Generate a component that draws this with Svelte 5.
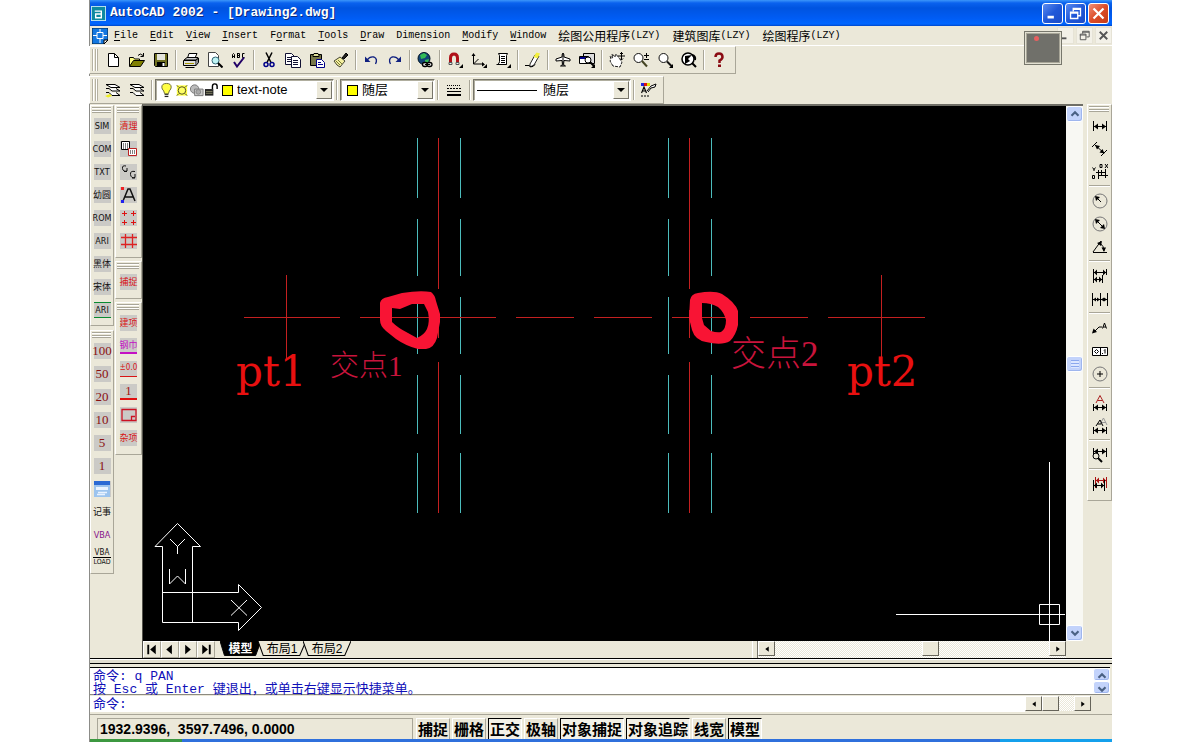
<script>
  const menus = [
    { pre: '', key: 'F', rest: 'ile' },
    { pre: '', key: 'E', rest: 'dit' },
    { pre: '', key: 'V', rest: 'iew' },
    { pre: '', key: 'I', rest: 'nsert' },
    { pre: 'F', key: 'o', rest: 'rmat' },
    { pre: '', key: 'T', rest: 'ools' },
    { pre: '', key: 'D', rest: 'raw' },
    { pre: 'Dime', key: 'n', rest: 'sion' },
    { pre: '', key: 'M', rest: 'odify' },
    { pre: '', key: 'W', rest: 'indow' },
    { cjk: '绘图公用程序', rest: '(LZY)' },
    { cjk: '建筑图库', rest: '(LZY)' },
    { cjk: '绘图程序', rest: '(LZY)' }
  ];

  const lens = '<circle cx="6.5" cy="6" r="4.5" fill="#fff" stroke="#111"/><path d="M10 9.500l5 5" stroke="#111" stroke-width="2"/>';
  const corner = '<path d="M16 12v4h-4z" fill="#000"/>';
  const hdim = '<path d="M1.500 3v10M14.500 3v10M2 8.500h12" stroke="#000" fill="none"/><path d="M2 8.500l4-3v6zM14 8.500l-4-3v6z" fill="#000"/>';
  const sheet = (x, y) =>
    `<path d="M${x}.500 ${y}.500h6l3 3v8h-9z" fill="#fff" stroke="#113"/><path d="M${x + 2} ${y + 4}.500h5M${x + 2} ${y + 6}.500h5M${x + 2} ${y + 8}.500h5" stroke="#113"/>`;

  const icons = {
    new: '<path d="M3.500 1.500h6l4 4v9h-10z" fill="#fff" stroke="#000"/><path d="M9.500 1.500v4h4" fill="none" stroke="#000"/>',
    open: '<path d="M.5 14V5.500h4l1 1.500h5v2" fill="#ffff80" stroke="#000"/><path d="M.5 14.500l4-6h11l-4 6z" fill="#808000" stroke="#000"/><path d="M9 3.500q2-3 5 0M14.500 1v3.500h-3" fill="none" stroke="#000"/>',
    save: '<path d="M1.500 1.500h13v13h-12l-1-1z" fill="#6f6f20" stroke="#000"/><path d="M4 2h8v6H4z" fill="#e4e4dc"/><path d="M4 10h8v5H4z" fill="#000"/><path d="M9.500 11h2v3h-2z" fill="#fff"/>',
    print: '<path d="M4.500 6l1.500-4.500h8L12 6" fill="#fff" stroke="#000"/><path d="M1 8l3-2.500h11L13 8z" fill="#ccc" stroke="#000"/><path d="M.5 8.500h12.500v5H.5z" fill="#ddd" stroke="#000"/><path d="M13 13.500l2.500-3V6L13 8.500" fill="#888" stroke="#000"/><path d="M2 11.500h9" stroke="#a90" stroke-width="1"/><path d="M2.500 15.500h9" stroke="#000"/>',
    preview: '<path d="M1.500 .5h7l3 3v11h-10z" fill="#fff" stroke="#444"/><circle cx="8.500" cy="8.500" r="3.500" fill="#bff4f4" stroke="#367"/><path d="M11 11l4.500 4.500" stroke="#000" stroke-width="2"/>',
    spell: '<path d="M1.500 6V2.500l1-1 1 1V6M1.500 4.500h2M6.500 1v5M6.500 1.500h2v2h-2h2v2h-2M13.500 1.500h-2v4h2" fill="none" stroke="#000"/><path d="M3 10l3 4.500 7-9" fill="none" stroke="#206" stroke-width="2"/>',
    cut: '<path d="M5 .5l5 10M11 .5l-5 10" stroke="#000" stroke-width="1.500"/><circle cx="5" cy="12.500" r="2" fill="none" stroke="#008" stroke-width="1.500"/><circle cx="11" cy="12.500" r="2" fill="none" stroke="#008" stroke-width="1.500"/>',
    copy: sheet(0, 1) + sheet(6, 4),
    paste: '<path d="M1.500 2.500h11v11h-11z" fill="#77774a" stroke="#000"/><path d="M4 3.500l1-2h4l1 2v1H4z" fill="#dd9" stroke="#000"/><path d="M7.500 7.500h5l3 3v5h-8z" fill="#fff" stroke="#008"/><path d="M9 10.500h3M9 12.500h5" stroke="#008"/>',
    brush: '<path d="M1 9l6-4 5 4-5 6q-3-1-6-6z" fill="#f4f0a0" stroke="#443"/><path d="M3 9l4 4M5 8l4 4" stroke="#773"/><path d="M9 6l4-5 2 2-4 4z" fill="#222" stroke="#000"/>',
    undo: '<path d="M4 8q3-4 7-3 4 2 1.500 7" fill="none" stroke="#102080" stroke-width="1.300"/><path d="M2 4.500v5.500h5.500z" fill="#102080"/>',
    redo: '<path d="M12 8Q9 4 5 5 1 7 3.500 12" fill="none" stroke="#102080" stroke-width="1.300"/><path d="M14 4.500v5.500H8.500z" fill="#102080"/>',
    globe: '<circle cx="7" cy="6.500" r="6" fill="#147" stroke="#012"/><path d="M3 3l4-2 3 2-2 3-4 1zM8 8l4-1-1 4H8z" fill="#3b5"/><rect x="5.500" y="10.500" width="5" height="4" rx="2" fill="#ddd" stroke="#000" stroke-width="1.300"/><rect x="10" y="10.500" width="5" height="4" rx="2" fill="#ddd" stroke="#000" stroke-width="1.300"/><path d="M8 12.500h5" stroke="#000"/>',
    magnet: '<path d="M3.500 12V6q0-4 3.500-4t3.500 4v6" fill="none" stroke="#b01018" stroke-width="3"/><path d="M2 10.500h3v2H2zM9 10.500h3v2H9z" fill="#eee" stroke="#555"/>' + corner,
    ucs: '<path d="M2.500 2v10h10M2.500 12l5-5" fill="none" stroke="#000"/><path d="M.5 4l2-3 2 3zM11 10l3 2.500-3 2z" fill="#000"/>' + corner,
    props: '<path d="M3.500 1.500h9l-1 2v9h-9q2-1 2-3v-6z" fill="#fff" stroke="#000"/><path d="M1.500 12.500h10M6 4.500h4M6 6.500h4M6 8.500h4M6 10.500h4" stroke="#000"/>' + corner,
    pencil: '<path d="M5 12l5-9 4 1-5 9-4 2z" fill="#fff" stroke="#222"/><path d="M8.500 5L11.500 .5l3.500 1-2.500 5z" fill="#f4f040"/><path d="M0 13.500h4q3 3 6-1" fill="none" stroke="#000"/>',
    plane: '<path d="M8 1q1 0 1 4l6 2v2l-6-.5-.5 4 2 1.500h-5l2-1.500-.5-4L1 9V7l6-2q0-4 1-4z" fill="#fff" stroke="#000"/><path d="M8 2v12" stroke="#000"/>',
    aerial: '<path d="M4.500 1.500h11v10h-11z" fill="#ddd" stroke="#000"/><path d="M.5 4.500h9v7h-9z" fill="#fff" stroke="#000"/><path d="M1 5h8v2H1z" fill="#008"/><circle cx="9" cy="8" r="3" fill="#fff" stroke="#000"/><path d="M11 10l4 4" stroke="#000" stroke-width="2"/>' + corner,
    pan: '<path d="M4 14L1 9l1-2-1-3 3 2-1-4 3.500 3L7 2l3 4 3 4-2 5z" fill="#fff" stroke="#222" stroke-dasharray="3 1"/><path d="M12.500 0v8M9 4h7M11 2l1.500-1.500L14 2M11 6.500l1.500 1.500L14 6.500" fill="none" stroke="#000"/>',
    zoompm: '<circle cx="5.500" cy="6" r="4.500" fill="#fff" stroke="#111"/><path d="M9 9l5 5.500" stroke="#442" stroke-width="2"/><path d="M13.500 1v5M11 3.500h5M11 7.500h5" stroke="#000"/>',
    zoom: lens + corner,
    zoomprev: '<circle cx="7" cy="7" r="6" fill="#fff" stroke="#000" stroke-width="1.500"/><path d="M11 3q4 1 3 5M11 11l4 4" stroke="#000" stroke-width="2" fill="none"/><path d="M4 12V4l7-1-4 4 2 2z" fill="#000"/>',
    help: '<path d="M4.500 5q0-3.500 3.500-3.500T11.500 5q0 2-3 3.500V11" fill="none" stroke="#8b0c14" stroke-width="2.500"/><path d="M7 12.500h3v2.500H7z" fill="#8b0c14"/>',
    layers: '<path d="M1 2.500h9l5 3H6zM1 6.500h3l3 2.500h8l-4-2.500M1 10.500h3l3 3h8l-4-3" fill="#fff" stroke="#000"/><path d="M0 14l5-2 2 2-4 1.500z" fill="#ee2"/>',
    layerprev: '<path d="M1 2.500h9l5 3H6zM1 6.500h3l3 2.500h8l-4-2.500M1 10.500h3l3 3h8l-4-3" fill="#fff" stroke="#000"/>',
    lweight: '<path d="M1 3.500h14" stroke="#000" stroke-dasharray="1 1"/><path d="M1 6.500h14" stroke="#000" stroke-dasharray="2 1"/><path d="M1 9.500h14" stroke="#000"/><path d="M1 13h14" stroke="#000" stroke-width="2"/>',
    styles: '<path d="M0 1h3v3H0z" fill="#22d"/><path d="M3 1h3v3H3z" fill="#d11"/><path d="M6 1h3v3H6z" fill="#dd0"/><path d="M.5 11l2.500-6 2.500 6M1.500 9h3M0 14h2M3 14h2M6 14h2" stroke="#000" fill="none" stroke-width="1.200"/><path d="M6 9l4-5 5-2-1 3-4 1-3 4" fill="#fff" stroke="#000"/>',
    dlin: hdim,
    dali: '<path d="M0 6l5-5M9 15l6-6M3 4l9 8" stroke="#000" fill="none"/><path d="M3 4l5 1-3 3.500zM12.500 12.500l-5-1 3-3.500z" fill="#000"/>',
    dord: '<path d="M6.500 6v9M6 11.500h10M4 8.500h9M9.500 6v5M13.500 5v9M.5 3.500l1.500 2 1.500-2M2 5v2M.5 11.500h2v3h-2zM8 .5h2v3H8zM13 0l3 4M16 0l-3 4" stroke="#000" fill="none"/>',
    drad: '<circle cx="8" cy="8" r="7" fill="none" stroke="#777"/><path d="M4 4l5 5" stroke="#000"/><path d="M3 3l5 1-4 4z" fill="#000"/>',
    ddia: '<circle cx="8" cy="8" r="7" fill="none" stroke="#777"/><path d="M4 4l8 8" stroke="#000"/><path d="M3 3l5 1-4 4zM13 13l-5-1 4-4z" fill="#000"/>',
    dang: '<path d="M1 13.500h14M1 13L9 2M8 4q4 3 4 8" stroke="#000" fill="none"/><path d="M5 4l5-2-1 5zM9.500 8.500h4.500l-2 4.500z" fill="#000"/>',
    dbase: '<path d="M1.500 1v14M14.500 1v6M2 4.500h12M10.500 7v8M2 11.500h8" stroke="#000" fill="none"/><path d="M2 4.500l3-3v6zM14 4.500l-3-3v6zM2 11.500l3-3v6zM10 11.500l-3-3v6z" fill="#000"/>',
    dcont: '<path d="M.5 2v13M8.500 2v13M15.500 2v13M1 8.500h14" stroke="#000" fill="none"/><path d="M1 8.500l3-2v4zM8 8.500l-3-2v4zM9 8.500l3-2v4zM15 8.500l-3-2v4z" fill="#000"/>',
    dlead: '<path d="M2 12l5-5h3M10.500 8.500l2-5.500 2 5.500M11 7h3" stroke="#000" fill="none"/><path d="M0 13.500l1.500-5 3.500 3.500z" fill="#000"/>',
    dtol: '<path d="M.5 4.500h15v8H.5zM8.500 4.500v8" stroke="#000" fill="#fff"/><path d="M4.500 6.500l2 2-2 2-2-2zM10 10.500h1M12 7.500l1-1v4" stroke="#000" fill="none"/>',
    dcen: '<circle cx="8" cy="8" r="7" fill="none" stroke="#777"/><path d="M8 5v6M5 8h6" stroke="#000"/>',
    dedit: '<path d="M1.500 9v7M14.500 9v7M2 12.500h12" stroke="#000"/><path d="M2 12.500l4-3v6zM14 12.500l-4-3v6z" fill="#000"/><path d="M4 8L8 .5 12 8M5.500 5.500h5" stroke="#a22" fill="none"/>',
    dtedit: '<path d="M1.500 9v7M14.500 9v7M2 12.500h12" stroke="#000"/><path d="M2 12.500l4-3v6zM14 12.500l-4-3v6z" fill="#000"/><path d="M8 6l3.500-6L15 7M9 4.500h5" stroke="#999" fill="none"/><path d="M4 8l4-6 3 6M5.500 6h4" stroke="#000" fill="none"/>',
    dupd: '<path d="M1.500 1v7M14.500 1v9M2 4.500h12" stroke="#000"/><path d="M2 4.500l4-3v6zM14 4.500l-4-3v6z" fill="#000"/><circle cx="4" cy="9" r="3" fill="none" stroke="#000"/><path d="M6 11l4 4" stroke="#000" stroke-width="2"/>',
    dstyle: '<path d="M3.500 1v11M14.500 1v11M4 4.500h11" stroke="#a11"/><path d="M4 4.500l3-3v6zM14 4.500l-3-3v6z" fill="#a11"/><path d="M1.500 4v11M12.500 4v11M2 9.500h10" stroke="#000"/><path d="M2 9.500l3-3v6zM12 9.500l-3-3v6z" fill="#000"/>',
    move: '<path d="M.5 .5h8v8h-8z" fill="#fff" stroke="#000"/><path d="M7.500 7.500h8v7h-8z" fill="#fff" stroke="#b22"/><path d="M2 3h5M2 5h5M2 7h5M9 10h5M9 12h5" stroke="#000" stroke-dasharray="1 1"/>',
    rotate: '<path d="M5 2Q1 1 1.500 4.500T6 7V4M6 7.500H3M14 7.500q-5-1-4.500 3t4.500 3V10M14 14h-3" fill="none" stroke="#111"/>',
    astyle: '<path d="M2 14L7 2h2l5 12M4 10h8" fill="none" stroke="#111" stroke-width="1.500"/><path d="M0 0h3v3H0z" fill="#e22"/><path d="M0 13h3v3H0z" fill="#22e"/>',
    crosses: '<path d="M1 3.500h5M3.500 1v5M10 3.500h5M12.500 1v5M1 12.500h5M3.500 10v5M10 12.500h5M12.500 10v5" stroke="#d11"/>',
    grid: '<path d="M0 4.500h16M0 11.500h16M4.500 1v14M11.500 1v14" stroke="#d22" stroke-width="1.300"/>',
    frame: '<path d="M1 2.500h14v11H1zM10.500 13V9.500H14" fill="none" stroke="#c12" stroke-width="1.300"/>',
    window: '<path d="M0 0h16v16H0z" fill="#9cc4ee"/><path d="M0 0h16v4H0z" fill="#2a6ad4"/><path d="M2 6h12v3H2z" fill="#eaf4ff"/><path d="M4 11.500h9M3 13.500h8" stroke="#e8f2ff" stroke-width="1.500"/>',
    bulb: '<path d="M6 15h4M6 13h4" stroke="#000"/><path d="M6 12L5 9Q3 7 3 5q0-4 5-4t5 4q0 2-2 4l-1 3z" fill="#ff4" stroke="#663"/>',
    sun: '<path d="M3 3h11v11H3z" fill="#ff4"/><path d="M3 3l2 2M14 3l-2 2M3 14l2-2M14 14l-2-2" stroke="#442"/><circle cx="8.500" cy="8.500" r="4" fill="#ff6" stroke="#442"/>',
    freeze: '<circle cx="6" cy="7" r="4.500" fill="#bbb" stroke="#777"/><path d="M6 7h9v7H6z" fill="#ccc" stroke="#777"/><circle cx="10" cy="10" r="2.500" fill="#aaa" stroke="#888"/>',
    lock: '<path d="M1 7h9v7H1z" fill="#222"/><path d="M2 9.500h7M2 11.500h7" stroke="#886"/><path d="M9 7V4q0-2.500 2.500-2.500T14 4v3" fill="none" stroke="#000" stroke-width="1.500"/>'
  };

  const standard = ['new', 'open', 'save', '|', 'print', 'preview', 'spell', '|', 'cut', 'copy', 'paste', 'brush', '|', 'undo', 'redo', '|', 'globe', '|', 'magnet', 'ucs', 'props', '|', 'pencil', '|', 'plane', 'aerial', '|', 'pan', 'zoompm', 'zoom', 'zoomprev', '|', 'help'];
  const dims = ['dlin', 'dali', 'dord', '|', 'drad', 'ddia', 'dang', '|', 'dbase', 'dcont', '|', 'dlead', 'dtol', 'dcen', '|', 'dedit', 'dtedit', '|', 'dupd', '|', 'dstyle'];

  const outerDock = [
    [{ t: 'SIM' }, { t: 'COM' }, { t: 'TXT' }, { t: '幼圆' }, { t: 'ROM' }, { t: 'ARI' }, { t: '黑体' }, { t: '宋体' }, { t: 'ARI', c: 'green' }],
    [{ t: '100', c: 'num' }, { t: '50', c: 'num' }, { t: '20', c: 'num' }, { t: '10', c: 'num' }, { t: '5', c: 'num' }, { t: '1', c: 'num' }, { i: 'window' }, { t: '记事', c: 'plain' }, { t: 'VBA', c: 'plain purple' }, { t: 'VBA', t2: 'LOAD', c: 'plain two' }]
  ];
  const innerDock = [
    [{ t: '清理', c: 'red' }, { i: 'move' }, { i: 'rotate' }, { i: 'astyle' }, { i: 'crosses' }, { i: 'grid' }],
    [{ t: '捕捉', c: 'red' }],
    [{ t: '建项', c: 'red' }, { t: '钢巾', c: 'magenta' }, { t: '±0.0', c: 'level' }, { t: '1', c: 'one' }, { i: 'frame' }, { t: '杂项', c: 'red' }]
  ];

  const modes = [
    ['捕捉', false], ['栅格', false], ['正交', true], ['极轴', false],
    ['对象捕捉', true], ['对象追踪', true], ['线宽', false], ['模型', true]
  ];

  const wallX = [417.5, 460.5, 668.5, 711.5];
  const wallDashes = [[138, 198], [219, 276], [297, 354], [375, 434], [453, 513]];
  const axisX = [438.5, 689.5];
  const axisDashes = [[138, 289], [310, 338], [362, 513]];
  const centreDashes = [[244, 340], [360, 496], [516, 574], [594, 652], [672, 730], [750, 808], [828, 925]];
  const navs = [
    ['First tab', 'M3 3h2v10H3zM12 3v10L6 8z'],
    ['Previous tab', 'M10 3v10L4 8z'],
    ['Next tab', 'M5 3v10l6-5z'],
    ['Last tab', 'M11 3h2v10h-2zM4 3v10l6-5z']
  ];
  let command = $state('');
</script>

{#snippet icon(name)}
  <svg class="ico" viewBox="0 0 16 16" aria-hidden="true">{@html icons[name]}</svg>
{/snippet}

{#snippet arrow(dir, blue)}
  <svg class="arr" viewBox="0 0 16 16" aria-hidden="true">
    <g transform="rotate({{ up: 0, right: 90, down: 180, left: 270 }[dir]} 8 8)">
      {#if blue}<path d="M4 10l4-4 4 4" fill="none" stroke="#4a6184" stroke-width="2.500" />
      {:else}<path d="M5 10l3-4 3 4z" fill="#000" />{/if}
    </g>
  </svg>
{/snippet}

{#snippet dock(groups)}
  {#each groups as group}
    <div class="group">
      <div class="hgrip"></div>
      {#each group as b}
        <button class="cell" aria-label={b.t ?? b.i}>
          {#if b.i}<span class="tile">{@render icon(b.i)}</span>
          {:else}<span class="tile {b.c ?? ''}">{b.t}{#if b.t2}<i>{b.t2}</i>{/if}</span>{/if}
        </button>
      {/each}
    </div>
  {/each}
{/snippet}

<div class="window">
  <header class="title">
    <svg class="logo" viewBox="0 0 16 16" aria-hidden="true">
      <rect x=".5" y=".5" width="15" height="15" fill="#0f8aa0" stroke="#bfe6ee" />
      <path d="M4 5.500h7v7H5v-4h6" fill="none" stroke="#fff" stroke-width="1.500" />
    </svg>
    <h1>AutoCAD 2002 - [Drawing2.dwg]</h1>
    <div class="winbtns">
      <button aria-label="Minimize"><svg viewBox="0 0 21 21"><path d="M5 13h7v3H5z" fill="#fff" /></svg></button>
      <button aria-label="Restore"><svg viewBox="0 0 21 21"><path d="M8 8V5h8v8h-3M8 6h8M5 9h8v7H5zM5 10h8" fill="none" stroke="#fff" stroke-width="1.500" /></svg></button>
      <button class="close" aria-label="Close"><svg viewBox="0 0 21 21"><path d="M5 5l11 11M16 5L5 16" stroke="#fff" stroke-width="2.500" /></svg></button>
    </div>
  </header>

  <nav class="menu">
    <svg class="docicon" viewBox="0 0 16 16" aria-hidden="true">
      <path d="M0 0h16v12l-4 4H0z" fill="#1478e0" stroke="#024" />
      <path d="M5 4.500h6v6H5zM8 1v3M8 11v4M1 7.500h4M11 7.500h4" fill="none" stroke="#fff" />
      <path d="M12 16v-4h4z" fill="#fff" stroke="#000" />
    </svg>
    {#each menus as m}
      {#if m.cjk}<button class="local"><span class="cjk">{m.cjk}</span><span>{m.rest}</span></button>
      {:else}<button>{m.pre}<u>{m.key}</u>{m.rest}</button>{/if}
    {/each}
    <div class="mdi">
      <button aria-label="Minimize drawing"><svg viewBox="0 0 16 16"><path d="M3 10h6v2H3z" fill="#555" /></svg></button>
      <button aria-label="Restore drawing"><svg viewBox="0 0 16 16"><path d="M6 6V3.500h7v6h-3M3.500 6.500h6v6h-6zM3 7.500h7M6 4.500h7" fill="none" stroke="#555" /></svg></button>
      <button aria-label="Close drawing"><svg viewBox="0 0 16 16"><path d="M4 4l8 8M12 4l-8 8" stroke="#555" stroke-width="2" /></svg></button>
    </div>
    <div class="pinbox"><span></span></div>
  </nav>

  <div class="toolbar">
    <div class="vgrip"></div>
    {#each standard as name}
      {#if name === '|'}<span class="vsep"></span>
      {:else}<button class="tool" aria-label={name}>{@render icon(name)}</button>{/if}
    {/each}
  </div>

  <div class="toolbar second">
    <div class="vgrip"></div>
    <button class="tool" aria-label="Layers">{@render icon('layers')}</button>
    <button class="tool" aria-label="Layer previous">{@render icon('layerprev')}</button>
    <span class="vsep"></span>
    <label class="combo layer">
      {@render icon('bulb')}{@render icon('sun')}{@render icon('freeze')}{@render icon('lock')}<b class="swatch"></b>
      <select aria-label="Layer"><option>text-note</option></select>
      <span class="drop"></span>
    </label>
    <span class="vsep"></span>
    <label class="combo colour">
      <b class="swatch"></b>
      <select aria-label="Color"><option>随层</option></select>
      <span class="drop"></span>
    </label>
    <span class="vsep"></span>
    <button class="tool wide" aria-label="Lineweight">{@render icon('lweight')}</button>
    <span class="vsep"></span>
    <label class="combo ltype">
      <b class="rule"></b>
      <select aria-label="Linetype"><option>随层</option></select>
      <span class="drop"></span>
    </label>
    <span class="vsep"></span>
    <button class="tool" aria-label="Styles">{@render icon('styles')}</button>
  </div>

  <main>
    <aside class="outer">{@render dock(outerDock)}</aside>
    <aside class="inner">{@render dock(innerDock)}</aside>

    <section class="drawing">
      <div class="view">
        <svg class="canvas" viewBox="143 106 923 535" preserveAspectRatio="xMidYMid meet" role="img" aria-label="Drawing">
          <g stroke="#4cbcbc">
            {#each wallX as x}{#each wallDashes as [a, b]}<path d="M{x} {a}V{b}" />{/each}{/each}
          </g>
          <g stroke="#c42020">
            {#each axisX as x}{#each axisDashes as [a, b]}<path d="M{x} {a}V{b}" />{/each}{/each}
            {#each centreDashes as [a, b]}<path d="M{a} 317.500H{b}" />{/each}
            <path d="M286.500 275V360M881.500 275V360" />
          </g>
          <g fill="#f81434" fill-rule="evenodd">
            <path d="M380 303Q381 298 388 297L402 293Q420 290 431 292Q435 295 436 301L440 314V322L437 338Q434 348 426 349H418Q406 346 396 339L386 331Q380 326 380 320ZM392 308V322Q398 328 408 333L417 338Q424 335 427 329Q430 322 428 312L424 304H412L400 309Z" />
            <path d="M690 300Q691 294 698 293Q714 290 722 294Q735 302 738 311V325Q736 335 730 341Q722 346 706 342Q695 340 692 330L689 318ZM702 303V318L704 325L711 331Q717 333 721 332Q726 329 726 320Q724 312 718 307Q711 303 702 303Z" />
          </g>
          <text class="pt" x="236" y="386">pt1</text>
          <text class="pt" x="847" y="386">pt2</text>
          <text class="cross" x="330" y="376" font-size="29">交点1</text>
          <text class="cross" x="731" y="366" font-size="35">交点2</text>
          <g fill="none" stroke="#fff">
            <path d="M162.500 622.500V546.500H155L177.500 523.500 200.500 546.500H192.500V622.500M162.500 592.500H238.500V584.500L261.500 607.500 238.500 630.500V622.500H162.500" />
            <path d="M170 539l7.500 7.500 7.500-7.500M177.500 546v8M169.500 569v15l8-8 8 8v-15M231 600l16 15.500M247 600l-16 15.500" />
            <path d="M896 614.500h169M1049.500 462v179M1039.500 604.500h20v20h-20z" />
          </g>
        </svg>
        <div class="vscroll">
          <button class="xp" aria-label="Scroll up">{@render arrow('up', true)}</button>
          <span class="before"></span>
          <button class="xp thumb" aria-label="Vertical position"></button>
          <span class="after"></span>
          <button class="xp" aria-label="Scroll down">{@render arrow('down', true)}</button>
        </div>
      </div>
      <div class="tabs">
        {#each navs as [label, d]}
          <button class="nav" aria-label={label}><svg viewBox="0 0 16 16"><path {d} fill="#000" /></svg></button>
        {/each}
        <div class="sheets">
          {#each ['模型', '布局1', '布局2'] as name, n}
            <button class:active={n === 0}>
              <svg viewBox="0 0 46 16" preserveAspectRatio="none" aria-hidden="true"><path d="M0 0l5 14.500h35L46 0" fill={n === 0 ? '#000' : '#ece9d8'} stroke="#000" /></svg>
              <span>{name}</span>
            </button>
          {/each}
        </div>
        <div class="hscroll">
          <span class="handle"></span>
          <button class="classic" aria-label="Scroll left">{@render arrow('left', false)}</button>
          <span class="hbefore"></span>
          <button class="classic" aria-label="Horizontal position"></button>
          <span class="hafter"></span>
          <button class="classic" aria-label="Scroll right">{@render arrow('right', false)}</button>
        </div>
      </div>
    </section>

    <aside class="dims">
      <div class="hgrip"></div>
      {#each dims as name}
        {#if name === '|'}<span class="hsep"></span>
        {:else}<button class="cell" aria-label={name}>{@render icon(name)}</button>{/if}
      {/each}
    </aside>
  </main>

  <div class="splitter"></div>

  <section class="console">
    <div class="log">
      <div class="lines">
        <p><span>命令</span>: q PAN</p>
        <p><span>按</span> Esc <span>或</span> Enter <span>键退出，或单击右键显示快捷菜单。</span></p>
      </div>
      <div class="spin">
        <button class="xp" aria-label="Log up">{@render arrow('up', true)}</button>
        <button class="xp" aria-label="Log down">{@render arrow('down', true)}</button>
      </div>
    </div>
    <div class="prompt">
      <label for="cmd"><span>命令</span>:</label>
      <input id="cmd" bind:value={command} />
      <button class="classic" aria-label="Command left">{@render arrow('left', false)}</button>
      <button class="classic" aria-label="Command position"></button>
      <span class="dots"></span>
      <button class="classic" aria-label="Command right">{@render arrow('right', false)}</button>
    </div>
  </section>

  <footer class="status">
    <output>1932.9396,&nbsp; 3597.7496, 0.0000</output>
    {#each modes as [name, on]}
      <button class:on aria-pressed={on}>{name}</button>
    {/each}
  </footer>
  <div class="taskbar"><i></i><b></b></div>
</div>

<style>
  :global(body) { background: #fff; }
  * { box-sizing: border-box; }
  button { border: 0; padding: 0; margin: 0; background: none; font: inherit; color: inherit; display: block; }
  svg { display: block; }
  .window {
    margin: 0 88px 0 89px;
    min-height: 100vh;
    display: flex;
    flex-direction: column;
    background: #ebe8d9;
    border-left: 1px solid #8c8c88;
    font-family: "Liberation Mono", "Noto Sans CJK SC", monospace;
    color: #000;
  }
  .ico { width: 16px; height: 16px; flex: none; }

  .title {
    height: 26px;
    display: flex;
    align-items: center;
    padding: 0 3px 0 1px;
    background: linear-gradient(#3c96fa 0, #0a62ee 3px, #0054e0 8px, #005cf4 18px, #0066ff 24px, #0046c8 26px);
  }
  .logo { width: 15px; height: 15px; }
  h1 { margin: 0 0 0 4px; font-size: 13px; line-height: 16px; color: #fff; text-shadow: 1px 1px #0a2a80; flex: 1; }
  .winbtns { display: flex; gap: 2px; }
  .winbtns button { width: 21px; height: 21px; border: 1px solid #fff; border-radius: 3px; background: linear-gradient(135deg, #5c8cf0, #2058d8 50%, #1c4cc8); }
  .winbtns .close { background: linear-gradient(135deg, #f09078, #dc4c28 50%, #c43c18); }
  .winbtns svg { width: 19px; height: 19px; }

  .menu { position: relative; height: 20px; display: flex; align-items: center; gap: 12px; padding-left: 2px; font-size: 10px; line-height: 16px; border-bottom: 1px solid #fff; }
  .docicon { width: 16px; height: 16px; margin-right: -6px; }
  .menu > button { white-space: nowrap; }
  .menu > .local { display: flex; align-items: center; }
  u { text-underline-offset: 2px; }
  .cjk { font: 12px/16px "Noto Sans CJK SC", sans-serif; }
  .mdi { margin-left: auto; display: flex; gap: 2px; }
  .mdi button { width: 17px; height: 17px; background: #f3f1e8; border: 1px solid #e6e3d6; }
  .mdi svg { width: 15px; height: 15px; }
  .pinbox { position: absolute; right: 50px; top: 5px; width: 38px; height: 34px; border: 1px solid #77776c; background: #70706a; box-shadow: inset 0 0 0 1px #e2e0d2, inset 0 0 0 2px #a8a698; }
  .pinbox span { position: absolute; left: 9px; top: 4px; width: 5px; height: 5px; border-radius: 50%; background: #e86060; }

  .toolbar {
    align-self: flex-start;
    height: 28px;
    display: flex;
    align-items: center;
    padding: 0 4px 0 2px;
    border: 1px solid #a9a698;
    border-top-color: #fff;
    border-left-color: #fff;
    margin-left: -1px;
  }
  .second { margin-top: 2px; padding-right: 2px; }
  .vgrip { width: 6px; height: 22px; margin-right: 3px; border: 1px solid #b4b1a2; border-width: 0 1px; background: linear-gradient(90deg, #fff 1px, #ebe8d9 1px 2px, #b4b1a2 2px 3px, #fff 3px); }
  .tool { width: 24px; height: 24px; display: flex; align-items: center; justify-content: center; }
  .wide { width: 26px; }
  .vsep { width: 2px; height: 20px; margin: 0 2px; border-left: 1px solid #a9a698; border-right: 1px solid #fff; }
  .combo {
    height: 22px;
    display: flex;
    align-items: center;
    background: #fff;
    border: 1px solid #77756a;
    border-right-color: #fff;
    border-bottom-color: #fff;
    box-shadow: inset 1px 1px #b0ae9f;
    padding: 1px 1px 1px 3px;
    font: 12px/16px "Liberation Sans", "Noto Sans CJK SC", sans-serif;
  }
  .layer { width: 179px; }
  .layer .ico { width: 15px; }
  .colour { width: 95px; }
  .ltype { width: 158px; }
  .swatch { width: 11px; height: 11px; border: 1px solid #000; background: #ff0; flex: none; margin: 0 2px 0 3px; }
  .rule { width: 60px; height: 1px; background: #000; margin-right: 4px; flex: none; }
  select { appearance: none; border: 0; background: none; font: inherit; font-size: 13px; color: #000; flex: 1; min-width: 0; padding: 0 2px; outline: 0; }
  .drop { width: 16px; height: 18px; flex: none; background: #ebe8d9; border: 1px solid #fff; border-right-color: #77756a; border-bottom-color: #77756a; display: grid; place-items: center; pointer-events: none; }
  .drop::after { content: ""; border: 4px solid transparent; border-top-color: #000; border-bottom: 0; }

  main { flex: 1; display: flex; min-height: 0; }
  aside { flex: none; }
  .outer { width: 24px; padding-top: 1px; }
  .inner { width: 27px; margin: 1px 0 0 1px; }
  .group { border: 1px solid #a9a698; border-top-color: #fff; border-left-color: #fff; padding-bottom: 4px; margin-bottom: 4px; }
  .inner .group { padding-bottom: 5px; margin-bottom: 3px; }
  .hgrip { height: 6px; margin: 1px 2px 1px 1px; border: 1px solid #a9a698; border-width: 1px 0; background: linear-gradient(#fff 1px, #ebe8d9 1px 2px, #a9a698 2px 3px, #fff 3px); }
  .cell { width: 100%; height: 23px; display: flex; align-items: center; justify-content: center; }
  .tile {
    width: 17px;
    height: 16px;
    display: flex;
    justify-content: center;
    align-items: center;
    background: #cbcac6;
    font: 9px/16px "DejaVu Sans Condensed", "Noto Sans CJK SC", sans-serif;
    color: #111;
    white-space: nowrap;
  }
  .tile.num { font: 13px/16px "Liberation Serif", serif; color: #8a1010; }
  .tile.plain { background: none; }
  .tile.purple { color: #86108a; }
  .tile.green { border: 1px solid #0a8a30; border-width: 1px 0; }
  .tile.two { flex-direction: column; font-size: 8px; line-height: 8px; }
  .two i { font-style: normal; font-size: 7px; line-height: 8px; border-top: 1px solid #000; }
  .tile.red { color: #d81414; }
  .tile.magenta { color: #c410c4; line-height: 12px; border-bottom: 2px solid #c410c4; }
  .tile.level { color: #d81414; font-size: 8px; line-height: 10px; border-bottom: 1px solid #d81414; }
  .tile.one { color: #a01010; font: 13px/14px "Liberation Serif", serif; border-bottom: 2px solid #e01010; }

  .drawing { flex: 1; min-width: 0; display: flex; flex-direction: column; border-left: 1px solid #55544c; border-top: 2px solid #6f6e66; }
  .view { flex: 1; display: flex; min-height: 320px; background: #000; }
  .canvas { flex: 1; min-width: 0; width: 0; background: #000; }
  .pt { font: 42px "DejaVu Serif", serif; fill: #e81010; }
  .cross { font-family: "Liberation Serif", "Noto Sans CJK SC", serif; font-weight: 300; fill: #c8143c; }
  .vscroll { width: 17px; flex: none; display: flex; flex-direction: column; background: #f8f8f3; }
  .before { flex: 235; }
  .after { flex: 254; }
  .xp { width: 17px; height: 16px; flex: none; border: 1px solid #fff; border-radius: 3px; background: #c3d3fb; box-shadow: inset -1px -1px #9fb6ee; display: grid; place-items: center; }
  .arr { width: 14px; height: 14px; }
  .thumb { background: repeating-linear-gradient(#8ca8ee 0 1px, #dde7ff 1px 3px) center / 8px 8px no-repeat #c3d3fb; }

  .tabs { height: 17px; display: flex; align-items: stretch; background: #ebe8d9; margin-right: 17px; }
  .nav { width: 18px; border: 1px solid #fff; border-right-color: #a9a698; border-bottom-color: #a9a698; }
  .nav svg { width: 16px; height: 15px; }
  .sheets { display: flex; margin-left: 5px; flex: 1; }
  .sheets button { position: relative; width: 48px; height: 16px; margin-right: -3px; font: 12px/13px "Liberation Sans", "Noto Sans CJK SC", sans-serif; }
  .sheets svg { position: absolute; inset: 0; width: 100%; height: 100%; }
  .sheets span { position: relative; }
  .sheets .active { color: #fff; font-weight: 700; width: 41px; }
  .hscroll { display: flex; width: 34%; background: repeating-conic-gradient(#fff 0 25%, #ebe8d9 0 50%) 0 0 / 2px 2px; }
  .handle { width: 6px; background: #ebe8d9; border-left: 1px solid #fff; border-right: 1px solid #77756a; }
  .hbefore { flex: 148; }
  .hafter { flex: 111; }
  .classic { width: 17px; height: 15px; flex: none; background: #ebe8d9; border: 1px solid #fff; border-right-color: #66645a; border-bottom-color: #66645a; display: grid; place-items: center; }

  .dims { width: 25px; margin: 0 0 auto 4px; border: 1px solid #a9a698; border-top-color: #fff; border-left-color: #fff; padding-bottom: 5px; }
  .dims .hgrip { margin-bottom: 2px; }
  .hsep { display: block; height: 2px; margin: 2px 1px; border-top: 1px solid #a9a698; border-bottom: 1px solid #fff; }

  .splitter { height: 9px; border-top: 1px solid #000; background: linear-gradient(#fff 1px, #e2dfd0 1px 4px, #000 4px 5px, #ebe8d9 5px); }
  .console { border-top: 1px solid #000; margin-right: 2px; color: #1010b8; font-size: 13px; line-height: 13px; }
  .console span { font-family: "Noto Sans CJK SC", sans-serif; font-size: 13px; line-height: 13px; }
  .log { display: flex; background: #fff; border-bottom: 1px solid #8c8a80; }
  .lines { flex: 1; padding-left: 3px; min-width: 0; }
  p { margin: 0; height: 13px; white-space: pre; }
  .spin { width: 17px; }
  .spin .xp { height: 13px; width: 17px; }
  .prompt { display: flex; align-items: center; height: 17px; padding-right: 19px; }
  .prompt label { background: #fff; height: 16px; line-height: 16px; padding-left: 3px; }
  .prompt input { flex: 1; min-width: 0; height: 16px; border: 0; padding: 0; background: #fff; color: inherit; font: inherit; outline: 0; }
  .prompt .dots { width: 15px; height: 15px; background: repeating-conic-gradient(#fff 0 25%, #ebe8d9 0 50%) 0 0 / 2px 2px; }

  .status { display: flex; gap: 2px; height: 25px; margin-top: 2px; padding: 3px 8px 0 7px; border-top: 1px solid #a9a698; font: 700 15px/20px "Noto Sans CJK SC", sans-serif; }
  output { width: 316px; font: 700 14px/20px "Liberation Sans", sans-serif; padding-left: 2px; border: 1px solid #a9a698; border-bottom: 0; margin-right: 1px; white-space: nowrap; }
  .status button { height: 21px; padding: 0 1px; border: 1px solid #fff; border-right-color: #a9a698; border-bottom: 0; white-space: nowrap; line-height: 20px; }
  .status .on { border-color: #000 #fff #fff #000; background: #f3f1e8; }
  .taskbar { height: 3px; display: flex; background: #2f70dc; }
  .taskbar i { width: 9%; background: #3c9840; margin-right: auto; }
  .taskbar b { width: 11%; background: #14a0ec; }
</style>
